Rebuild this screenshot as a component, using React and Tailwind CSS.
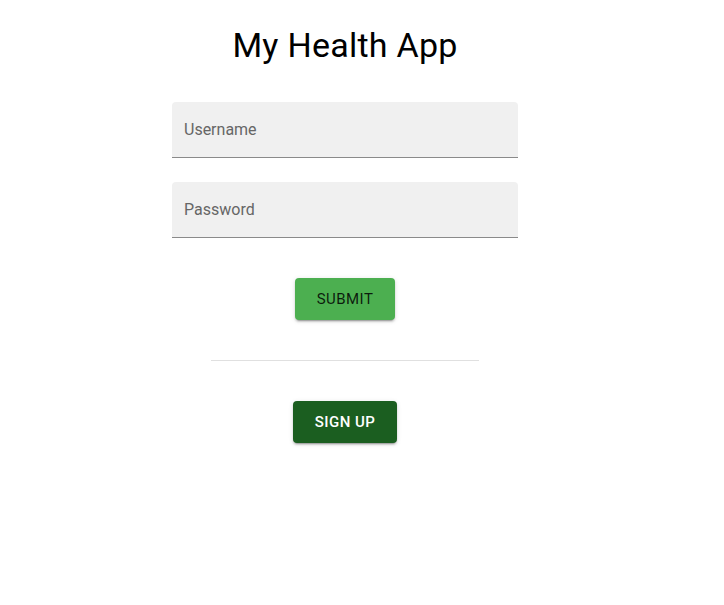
import React from "react";

export default function App() {
  return (
    <div className="min-h-screen bg-white font-['Roboto',sans-serif]">
      <div className="w-[690px] flex flex-col items-center">
        <h1 className="mt-[24px] text-[34px] leading-[42px] font-normal text-black tracking-[0.25px]">
          My Health App
        </h1>

        <form className="mt-[36px] w-[346px] flex flex-col gap-6">
          <div className="h-14 rounded-t bg-[#f0f0f0] border-b border-[#8a8a8a] flex items-center px-3">
            <input
              type="text"
              placeholder="Username"
              className="w-full bg-transparent outline-none text-base text-black placeholder:text-[#666666]"
            />
          </div>
          <div className="h-14 rounded-t bg-[#f0f0f0] border-b border-[#8a8a8a] flex items-center px-3">
            <input
              type="password"
              placeholder="Password"
              className="w-full bg-transparent outline-none text-base text-black placeholder:text-[#666666]"
            />
          </div>
        </form>

        <button
          type="button"
          className="mt-10 h-[42px] px-[22px] rounded bg-[#4caf50] text-[15px] font-normal tracking-[0.46px] text-black/85 uppercase shadow-[0_3px_1px_-2px_rgba(0,0,0,0.2),0_2px_2px_0_rgba(0,0,0,0.14),0_1px_5px_0_rgba(0,0,0,0.12)]"
        >
          Submit
        </button>

        <hr className="mt-10 w-[268px] border-t border-[#e0e0e0]" />

        <button
          type="button"
          className="mt-10 h-[42px] px-[22px] rounded bg-[#1b5e20] text-[15px] font-medium tracking-[0.46px] text-white uppercase shadow-[0_3px_1px_-2px_rgba(0,0,0,0.2),0_2px_2px_0_rgba(0,0,0,0.14),0_1px_5px_0_rgba(0,0,0,0.12)]"
        >
          Sign up
        </button>
      </div>
    </div>
  );
}
